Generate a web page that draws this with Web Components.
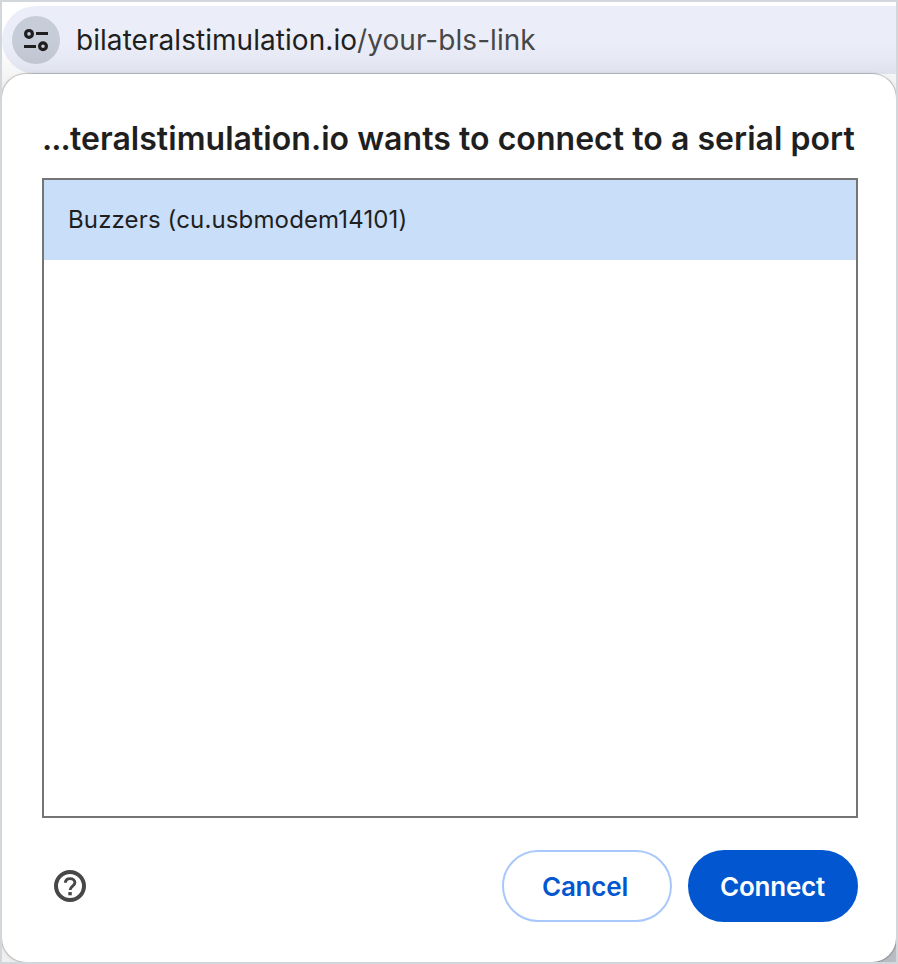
<!DOCTYPE html>
<html lang="en">
<head>
<meta charset="utf-8">
<title>Serial port</title>
<style>
  html, body { height: 100%; }
  body {
    margin: 0;
    font-family: Inter, "Liberation Sans", sans-serif;
    color: #1f1f1f;
  }
  .ellipsis { letter-spacing: -0.9px; }
</style>
</head>
<body>
<template id="frameTemplate">
  <style>
    :host {
      box-sizing: border-box;
      display: flex;
      flex-direction: column;
      height: 100%;
      padding-top: 4px;
      border: 2px solid #d2d7dc;
      overflow: hidden;
      background:
        linear-gradient(#bcbec5, #bcbec5) right bottom / 24px 24px no-repeat,
        linear-gradient(#fff 40px, #f1f1f1 86px, #f1f1f1);
    }
  </style>
  <slot></slot>
</template>

<template id="addressTemplate">
  <style>
    :host {
      box-sizing: border-box;
      display: flex;
      align-items: center;
      flex: none;
      height: 68px;
      padding-left: 10px;
      border-radius: 34px 0 0 34px;
      background: linear-gradient(#ebeef8 36px, #e6e9f3 54px, #dfe2ec);
      font-size: 28px;
      line-height: 34px;
      white-space: nowrap;
    }
    .site {
      width: 48px;
      height: 48px;
      margin-right: 16px;
      border-radius: 50%;
      background: linear-gradient(#c6ccd8 50%, #c0c5d1);
    }
    svg { display: block; }
    .url { letter-spacing: 0.05px; }
    .path { color: #474747; }
  </style>
  <span class="site">
    <svg width="48" height="48" fill="none" stroke="#1f1f1f" stroke-width="3.2">
      <circle cx="17" cy="17.9" r="3.4"/>
      <path d="M24 17.5h12M12 30.5h12"/>
      <circle cx="31" cy="30.3" r="3.4"/>
    </svg>
  </span>
  <span class="url"><slot></slot><span class="path"><slot name="path"></slot></span></span>
</template>

<template id="dialogTemplate">
  <style>
    :host {
      box-sizing: border-box;
      display: flex;
      flex-direction: column;
      flex: 1;
      padding: 44px 38px 40px 40px;
      border-radius: 24px;
      background: #fff;
      box-shadow: 0 0 1px 1px rgba(0, 0, 0, .22), 0 2px 8px rgba(0, 0, 0, .06);
    }
    h1 {
      margin: 0 0 18px;
      font-size: 32px;
      font-weight: 600;
      line-height: 42px;
      letter-spacing: 0.05px;
      white-space: nowrap;
    }
    footer {
      display: flex;
      align-items: center;
      gap: 16px;
      margin-top: 32px;
    }
    .help {
      display: block;
      margin: 0 auto 0 12px;
    }
  </style>
  <h1><slot name="title"></slot></h1>
  <slot></slot>
  <footer>
    <svg class="help" width="32" height="32" viewBox="0 0 32 32" fill="none" stroke="#474747">
      <circle cx="16" cy="16" r="14" stroke-width="4"/>
      <path d="M11.2 12.8C11.6 10 13.5 8.6 16.1 8.6c2.8 0 4.8 1.7 4.8 4.1 0 3.2-4.8 3.7-4.8 7.3" stroke-width="2.9"/>
      <path d="M14.3 22.1h3.5v3.2h-3.5z" fill="#474747" stroke="none"/>
    </svg>
    <slot name="actions"></slot>
  </footer>
</template>

<template id="portListTemplate">
  <style>
    :host {
      box-sizing: border-box;
      display: block;
      flex: 1;
      border: 2px solid #757575;
    }
  </style>
  <slot></slot>
</template>

<template id="portTemplate">
  <style>
    :host {
      box-sizing: border-box;
      display: flex;
      align-items: center;
      height: 80px;
      padding: 0 24px 2px;
      font-size: 24px;
      letter-spacing: 0.14px;
      white-space: nowrap;
    }
    :host([selected]) { background: #c9def9; }
  </style>
  <slot></slot>
</template>

<template id="buttonTemplate">
  <style>
    :host { display: block; }
    button {
      box-sizing: border-box;
      display: block;
      width: 170px;
      height: 72px;
      padding: 0 4px 0 0;
      border: 2px solid #a8c7fa;
      border-radius: 36px;
      background: #fff;
      color: #0257d0;
      font: inherit;
      font-size: 26px;
      font-weight: 600;
      letter-spacing: -0.2px;
    }
    :host([primary]) button {
      padding-right: 1px;
      border-color: #0257d0;
      background: #0257d0;
      color: #fff;
    }
  </style>
  <button><slot></slot></button>
</template>

<window-frame>
  <address-bar>bilateralstimulation.io<span slot="path">/your-bls-link</span></address-bar>
  <chooser-dialog>
    <span slot="title"><span class="ellipsis">...</span>teralstimulation.io wants to connect to a serial port</span>
    <port-list>
      <port-item selected>Buzzers (cu.usbmodem14101)</port-item>
    </port-list>
    <dialog-button slot="actions">Cancel</dialog-button>
    <dialog-button slot="actions" primary>Connect</dialog-button>
  </chooser-dialog>
</window-frame>

<script>
  (() => {
    const define = (name, id) => {
      const template = document.getElementById(id);
      customElements.define(name, class extends HTMLElement {
        constructor() {
          super();
          this.attachShadow({mode: 'open'});
          this.shadowRoot.appendChild(template.content.cloneNode(true));
        }
      });
    };

    define('window-frame', 'frameTemplate');
    define('address-bar', 'addressTemplate');
    define('chooser-dialog', 'dialogTemplate');
    define('port-list', 'portListTemplate');
    define('port-item', 'portTemplate');
    define('dialog-button', 'buttonTemplate');
  })();
</script>
</body>
</html>
